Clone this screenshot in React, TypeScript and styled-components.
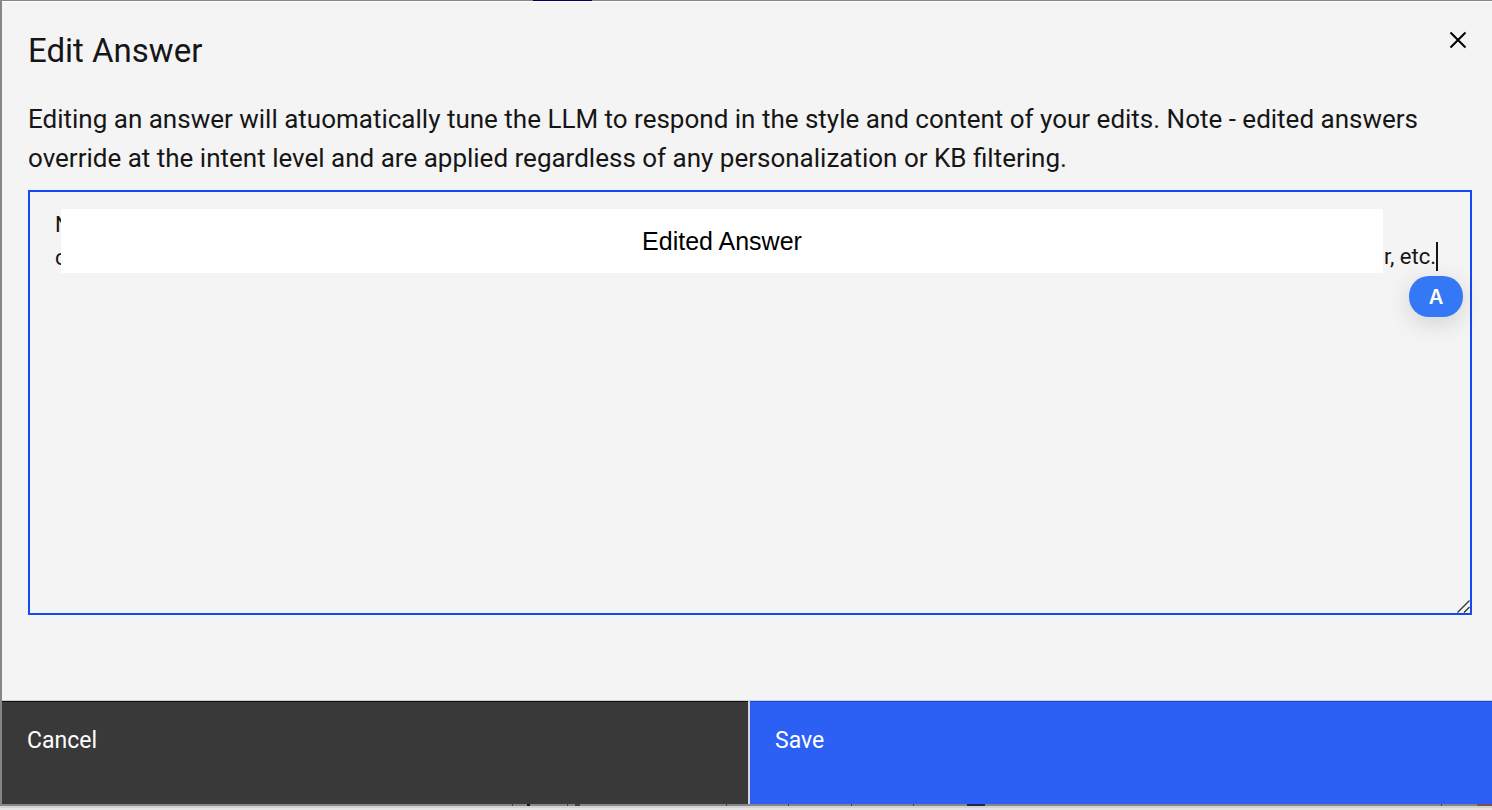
import React from "react";
import styled, { createGlobalStyle } from "styled-components";

const GlobalStyle = createGlobalStyle`
  *, *::before, *::after { box-sizing: border-box; }
  body {
    margin: 0;
    background: #e6e4e2;
    color: #161616;
    font-family: Roboto, "Liberation Sans", sans-serif;
  }
`;

const Page = styled.div`
  display: flex;
  flex-direction: column;
  min-height: 100vh;
  overflow: hidden;
`;

const Backdrop = styled.div`
  flex: 1;
  display: flex;
  flex-direction: column;
  padding: 0 0 2px 2px;
  background: #868686;
  border-bottom: 2px solid #d2d2d2;
  margin-bottom: 2px;
`;

const TopEdge = styled.svg`
  display: block;
  width: 100%;
  height: 1px;
`;

const Dialog = styled.section`
  flex: 1;
  display: flex;
  flex-direction: column;
  margin-right: -4px;
  background: #f4f4f4;
  border-top: 1px solid #fff;
`;

const Header = styled.header`
  display: flex;
  justify-content: space-between;
  align-items: flex-start;
  padding: 22px 22px 0 26px;
`;

const Title = styled.h1`
  margin: 4px 0 0;
  font-size: 33px;
  line-height: 46px;
  font-weight: 400;
`;

const CloseButton = styled.button`
  display: flex;
  padding: 4px;
  border: 0;
  background: none;
  color: #000;
`;

const Body = styled.div`
  flex: 1;
  display: flex;
  flex-direction: column;
  padding: 26px 24px 85px 26px;
`;

const Description = styled.label`
  margin-bottom: 12px;
  font-size: 26px;
  line-height: 39px;
`;

const Editor = styled.div`
  position: relative;
  flex: 1;
  display: flex;
  font-size: 22px;
  line-height: 33px;
`;

const AnswerInput = styled.textarea`
  flex: 1;
  min-height: 200px;
  padding: 16px 25px;
  border: 2px solid #1748f5;
  border-radius: 0;
  outline: 0;
  resize: none;
  background: transparent;
  color: inherit;
  font: inherit;
`;

const Cover = styled.div`
  position: absolute;
  top: 19px;
  left: 33px;
  right: 34px;
  height: 64px;
  display: flex;
  align-items: flex-end;
`;

const CoverLabel = styled.div`
  flex: 1;
  align-self: stretch;
  display: flex;
  align-items: center;
  justify-content: center;
  z-index: 1;
  background: #fff;
  color: #000;
  font-family: "Liberation Sans", sans-serif;
  font-size: 25px;
  line-height: 32px;
`;

const TextTail = styled.span`
  display: flex;
  justify-content: flex-end;
  width: 53px;
  white-space: nowrap;
`;

const Caret = styled.span`
  width: 2px;
  height: 29px;
  margin-bottom: 2px;
  background: #161616;
`;

const InputBadge = styled.span`
  position: absolute;
  top: 86px;
  right: 9px;
  display: flex;
  align-items: center;
  justify-content: center;
  width: 54px;
  height: 41px;
  padding-top: 2px;
  border-radius: 20px;
  background: #3478f6;
  box-shadow: 0 6px 24px rgba(0, 0, 0, 0.14);
  color: #fff;
  font-family: Inter, sans-serif;
  font-size: 20px;
  font-weight: 600;
`;

const ResizeGrip = styled.svg`
  position: absolute;
  right: 2px;
  bottom: 2px;
`;

const Footer = styled.footer`
  display: flex;
  gap: 2px;
  border-top: 1px solid #d0d0d0;
  background: #d6d6d6;
`;

const ActionButton = styled.button<{ $primary?: boolean }>`
  flex: 1;
  display: flex;
  align-items: flex-start;
  height: 103px;
  padding: 22px 25px;
  border: 0;
  border-top: 1px solid ${(p) => (p.$primary ? "#1047e8" : "#0c0c0c")};
  background: ${(p) => (p.$primary ? "#2c60f4" : "#393939")};
  color: #fff;
  font-family: inherit;
  font-size: 23px;
  line-height: 33px;
`;

const BottomEdge = styled.svg`
  display: block;
  width: 100%;
  height: 2px;
  margin-bottom: -2px;
`;

export default function App() {
  return (
    <Page>
      <GlobalStyle />
      <Backdrop>
        <TopEdge aria-hidden="true">
          <rect x="531" width="59" height="1" fill="#000050" />
        </TopEdge>
        <Dialog role="dialog" aria-modal="true" aria-labelledby="dialog-title">
          <Header>
            <Title id="dialog-title">Edit Answer</Title>
            <CloseButton type="button" aria-label="Close">
              <svg width="24" height="24" viewBox="0 0 24 24" fill="none" stroke="currentColor" strokeWidth="2">
                <path d="M4.5 4.5 L19.5 19.5 M19.5 4.5 L4.5 19.5" />
              </svg>
            </CloseButton>
          </Header>
          <Body>
            <Description htmlFor="answer">
              Editing an answer will atuomatically tune the LLM to respond in the style and content of your
              edits. Note - edited answers override at the intent level and are applied regardless of any
              personalization or KB filtering.
            </Description>
            <Editor>
              <AnswerInput id="answer" defaultValue={"N\nc"} spellCheck={false} />
              <Cover>
                <CoverLabel>Edited Answer</CoverLabel>
                <TextTail>r, etc.</TextTail>
                <Caret />
              </Cover>
              <InputBadge>A</InputBadge>
              <ResizeGrip width="13" height="13" viewBox="0 0 13 13" stroke="#333" strokeWidth="1.3" aria-hidden="true">
                <path d="M0.5 12.5 L12.5 0.5 M7 12.5 L12.5 7" />
              </ResizeGrip>
            </Editor>
          </Body>
          <Footer>
            <ActionButton type="button">Cancel</ActionButton>
            <ActionButton type="button" $primary>
              Save
            </ActionButton>
          </Footer>
        </Dialog>
        <BottomEdge aria-hidden="true">
          <g fill="#444">
            <rect x="510" width="1" height="2" />
            <rect x="525" width="3" height="2" fill="#1a1a1a" />
            <rect x="565" width="1" height="2" />
            <rect x="573" width="5" height="2" />
            <rect x="724" width="1" height="2" />
            <rect x="786" width="1" height="2" />
            <rect x="849" width="1" height="2" />
            <rect x="911" width="1" height="2" />
            <rect x="1439" width="1" height="2" />
          </g>
          <rect x="965" width="18" height="2" fill="#20264e" />
          <rect x="1475" width="15" height="2" fill="#8a4a50" />
        </BottomEdge>
      </Backdrop>
    </Page>
  );
}
